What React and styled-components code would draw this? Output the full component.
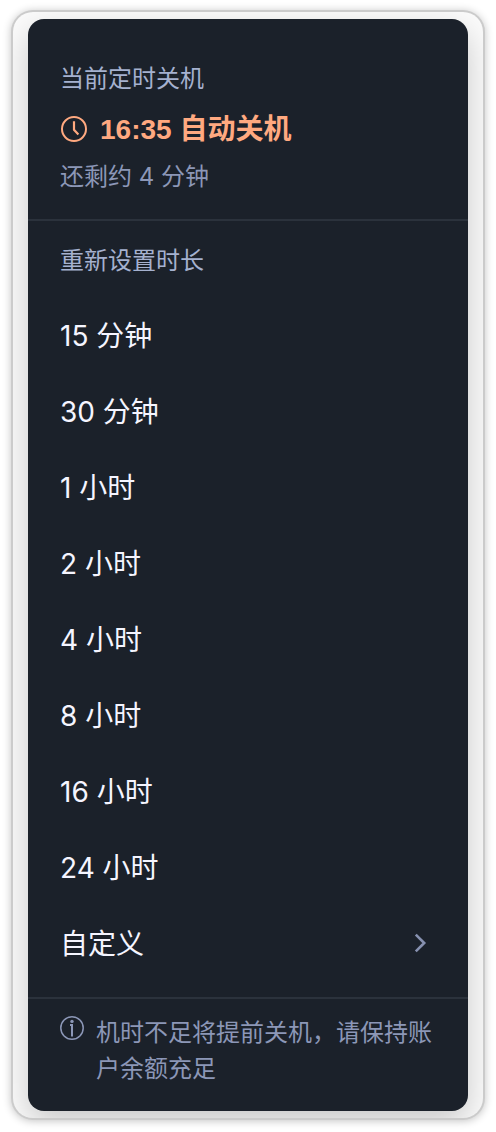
import styled, { createGlobalStyle } from 'styled-components'

const GlobalStyle = createGlobalStyle`
	* {
		box-sizing: border-box;
	}

	body {
		margin: 0;
		background-color: white;
		font-family: Inter, 'Noto Sans CJK SC', sans-serif;
	}
`

const Page = styled.main`
	padding: 12px 13px 14px;
`

const Frame = styled.div`
	padding: 7px 15px;
	border-radius: 20px;
	background-color: #fbfbfb;
	box-shadow: 0 0 0 2px #cbcbcb, 0 1px 8px 2px rgba(0, 0, 0, 0.24);
	overflow: hidden;
`

const Panel = styled.div`
	padding-top: 16px;
	border-radius: 16px;
	background-color: #1b212a;
	box-shadow: 0 12px 32px rgba(0, 0, 0, 0.2);
`

const Current = styled.section`
	padding: 26px 32px 24px;
	border-bottom: 2px solid #2b323c;
`

const Label = styled.h2`
	margin: 0;
	font-size: 24px;
	line-height: 36px;
	font-weight: 400;
	color: #a5b1cf;
`

const Time = styled.p`
	display: flex;
	align-items: center;
	gap: 12px;
	margin: 12px 0 8px;
	font-family: 'Liberation Sans', 'Noto Sans CJK SC', sans-serif;
	font-size: 28px;
	line-height: 42px;
	font-weight: 600;
	color: #ffa980;
`

const Remaining = styled.p`
	margin: 0;
	font-size: 24px;
	line-height: 36px;
	color: #8c97b7;
`

const Durations = styled.section`
	padding: 22px 0 15px;
`

const DurationsLabel = styled(Label)`
	padding: 0 32px;
	margin-bottom: 19px;
`

const List = styled.ul`
	list-style: none;
	margin: 0;
	padding: 0;
`

const Option = styled.button`
	display: flex;
	align-items: center;
	justify-content: space-between;
	width: 100%;
	padding: 16px 32px;
	border: none;
	background-color: transparent;
	font-family: inherit;
	font-size: 28px;
	line-height: 44px;
	text-align: left;
	color: #f5f5ff;
	cursor: pointer;

	&:hover {
		background-color: #252c37;
	}
`

const Note = styled.footer`
	display: flex;
	align-items: flex-start;
	gap: 12px;
	padding: 16px 32px 24px;
	border-top: 2px solid #2b323c;
	font-size: 24px;
	line-height: 36px;
	color: #8c97b7;
`

const NoteText = styled.p`
	flex: 1;
	margin: 0;
`

const Icon = styled.svg`
	flex: none;
	fill: none;
	stroke: currentColor;
`

const ArrowIcon = styled(Icon)`
	color: #8791b0;
`

const durations = ['15 分钟', '30 分钟', '1 小时', '2 小时', '4 小时', '8 小时', '16 小时', '24 小时']

const ClockIcon = () => (
	<Icon width="28" height="28" viewBox="0 0 28 28" strokeWidth="2" aria-hidden="true">
		<circle cx="14" cy="13" r="12" />
		<path d="M14 5.3v8.5l4.4 4.6" strokeWidth="2.2" />
	</Icon>
)

const ChevronIcon = () => (
	<ArrowIcon width="28" height="28" viewBox="0 0 28 28" strokeWidth="2.6" aria-hidden="true">
		<path d="M7.8 4.6L16.2 13l-8.4 8.4" />
	</ArrowIcon>
)

const InfoIcon = () => (
	<Icon width="24" height="28" viewBox="0 0 24 28" strokeWidth="1.5" aria-hidden="true">
		<circle cx="12" cy="13" r="11.2" />
		<path d="M10 10h2v11.5" strokeWidth="2" />
		<circle cx="12" cy="6.4" r="1.7" fill="currentColor" stroke="none" />
	</Icon>
)

const App = () => {
	return (
		<Page>
			<GlobalStyle />
			<Frame>
				<Panel>
					<Current>
						<Label>当前定时关机</Label>
						<Time>
							<ClockIcon />
							<span>16:35 自动关机</span>
						</Time>
						<Remaining>还剩约 4 分钟</Remaining>
					</Current>
					<Durations>
						<DurationsLabel>重新设置时长</DurationsLabel>
						<List>
							{durations.map((item) => (
								<li key={item}>
									<Option type="button">{item}</Option>
								</li>
							))}
							<li>
								<Option type="button">
									自定义
									<ChevronIcon />
								</Option>
							</li>
						</List>
					</Durations>
					<Note>
						<InfoIcon />
						<NoteText>机时不足将提前关机，请保持账户余额充足</NoteText>
					</Note>
				</Panel>
			</Frame>
		</Page>
	)
}

export default App
